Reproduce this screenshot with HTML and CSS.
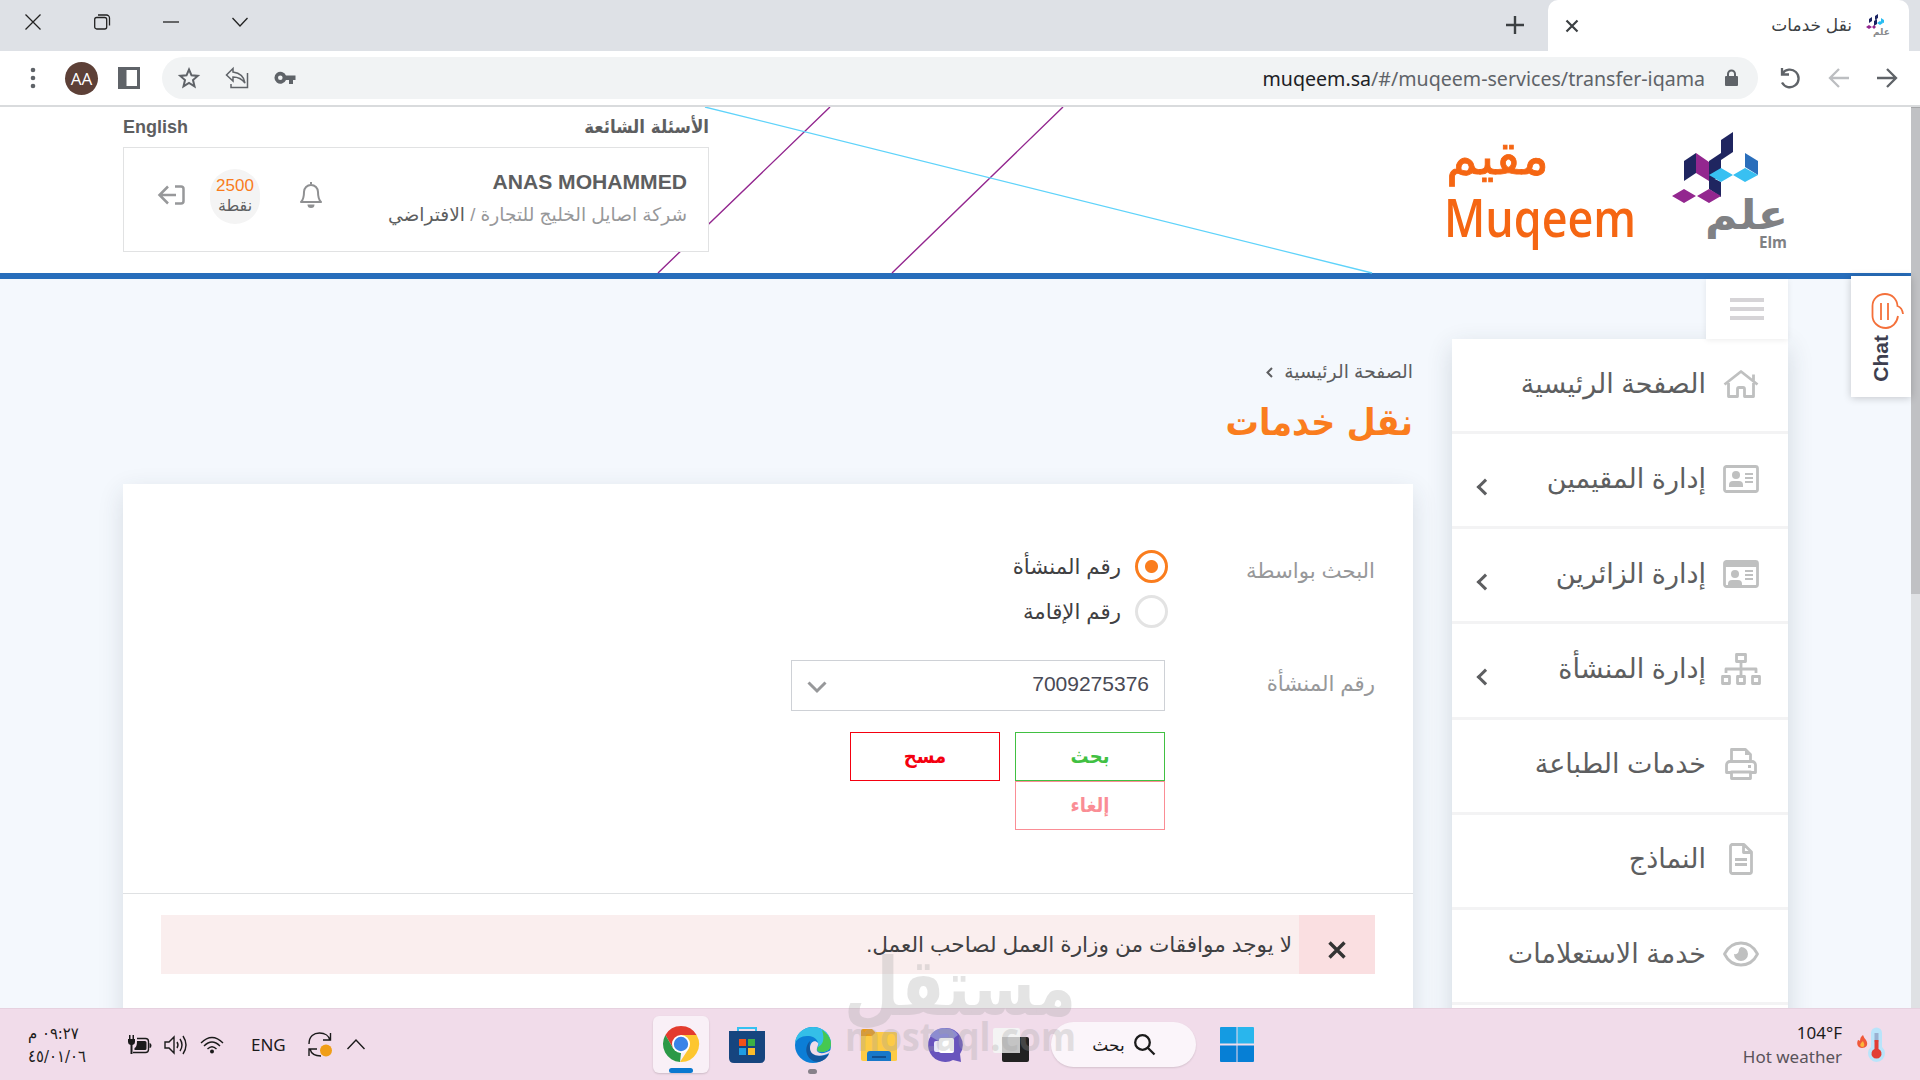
FILE: index.html
```html
<!DOCTYPE html>
<html lang="ar" dir="rtl">
<head>
    <meta charset="UTF-8">
    <meta name="viewport" content="width=device-width, initial-scale=1.0">
    <title>نقل خدمات</title>
    <link rel="stylesheet" href="styles.css">
</head>
<body>
    <!-- Browser tabs -->
    <div class="tabstrip">
        <div class="window-controls">
            <svg width="16" height="18" viewBox="0 0 16 18"><path d="M.5 1.5l15 15M15.500 1.500l-15 15"/></svg>
            <svg width="16" height="16" viewBox="0 0 16 16"><rect x=".7" y="3.500" width="12" height="11.500" rx="2"/><path d="M4 1h8.500a3 3 0 0 1 3 3v7.500"/></svg>
            <svg width="16" height="16" viewBox="0 0 16 16"><path d="M0 8h16"/></svg>
            <svg width="16" height="16" viewBox="0 0 16 16"><path d="M.5 4l7.500 8 7.500-8"/></svg>
        </div>
        <svg class="new-tab" width="18" height="18" viewBox="0 0 18 18"><path d="M9 0v18M0 9h18"/></svg>
        <div class="tab">
            <svg class="tab-close" width="12" height="12" viewBox="0 0 12 12"><path d="M.5.5l11 11M11.500.5l-11 11"/></svg>
            <span class="tab-title" dir="rtl">نقل خدمات</span>
            <svg class="favicon" width="24" height="24" viewBox="0 0 24 24">
                <path fill="#1c2463" d="M9 2l3-2v4L9 6zM3 5l3-2v4L3 9zM8 7l3-2v5L8 12z"/>
                <path fill="#27bdf2" d="M11 9l3-2 3 2-3 2zM15 4l3 2v3l-3-1z"/>
                <path fill="#93278f" d="M0 13l3-2 3 2-3 2zM6 13l2-2 2 2-2 2z"/>
                <text class="favicon-name" x="7" y="21">علم</text>
            </svg>
        </div>
    </div>

    <!-- Browser toolbar -->
    <div class="toolbar">
        <svg class="dots" width="6" height="22" viewBox="0 0 6 22"><circle cx="3" cy="3" r="2.300"/><circle cx="3" cy="11" r="2.300"/><circle cx="3" cy="19" r="2.300"/></svg>
        <span class="avatar">AA</span>
        <svg class="side-panel" width="22" height="22" viewBox="0 0 22 22"><path d="M0 0h22v22H0zM8.500 3v16H19V3z" fill-rule="evenodd"/></svg>
        <div class="omnibox">
            <svg width="22" height="22" viewBox="0 0 22 22"><path fill="none" stroke="#5f6368" stroke-width="2" d="M11 2.500l2.500 5.800 6.300.6-4.800 4.200 1.500 6.200L11 16l-5.500 3.300L7 13.100 2.200 8.900l6.300-.6z"/></svg>
            <svg width="24" height="22" viewBox="0 0 24 22"><path fill="none" stroke="#5f6368" stroke-width="1.500" d="M8 1.500L1.500 8 8 14v-4c6 0 9 2 12 6-1-7-5-10-12-11zM6 17v3.500h16.500V6"/></svg>
            <svg width="22" height="14" viewBox="0 0 22 14"><path fill="#5f6368" fill-rule="evenodd" d="M12 4.500A6 6 0 1 0 12 9h3v4h4V9h2.500V4.500zM6.300 4.500a2.300 2.300 0 1 1 0 4.600 2.300 2.300 0 0 1 0-4.600z"/></svg>
            <span class="url">muqeem.sa<span>/#/muqeem-services/transfer-iqama</span></span>
            <svg class="lock" width="13" height="18" viewBox="0 0 13 18"><path fill="#5f6368" fill-rule="evenodd" d="M2 7V5a4.500 4.500 0 0 1 9 0v2h1a1 1 0 0 1 1 1v8a1 1 0 0 1-1 1H1a1 1 0 0 1-1-1V8a1 1 0 0 1 1-1zm2 0h5V5a2.500 2.500 0 0 0-5 0z"/></svg>
        </div>
        <svg class="nav-icon" width="22" height="22" viewBox="0 0 22 22"><path d="M3.500 6.500A8.800 8.800 0 1 1 3 15.500M3 1v6.500h7"/></svg>
        <svg class="nav-icon disabled" width="20" height="20" viewBox="0 0 20 20"><path d="M10 1l-9 9 9 9M1 10h19"/></svg>
        <svg class="nav-icon" width="20" height="20" viewBox="0 0 20 20"><path d="M10 1l9 9-9 9M0 10h19"/></svg>
    </div>

    <div class="viewport">
        <div class="page">
            <header class="header">
                <svg class="header-lines" width="1911" height="166" viewBox="0 0 1911 166">
                    <path stroke="#93278f" stroke-width="1.400" d="M830 0L658 166M1063 0L892 166"/>
                    <path stroke="#5fd3fa" stroke-width="1.300" d="M705 0l667 166"/>
                </svg>
                <div class="logos">
                    <svg width="116" height="120" viewBox="0 0 116 120">
                        <path fill="#1f2560" d="M49 7l12-8v20l-12 8zM12 28l12-8v20l-12 8zM37 28l12-8v22l-12 8zM37 43l12 6v15l-12-8z"/>
                        <path fill="#93278f" d="M24 20l13 9v19l-13-8zM0 63l12-7 12 7-12 7zM25 63l12-7 12 7-12 7z"/>
                        <path fill="#2a6ebb" d="M73 20l13 8v14l-13-8z"/>
                        <path fill="#38c0f2" d="M37 42l12-7 12 7-12 7zM61 42l12-7 13 7-13 7z"/>
                        <text class="elm-ar" x="116" y="96" textLength="83" lengthAdjust="spacingAndGlyphs">علم</text>
                        <text class="elm-en" x="115" y="115" textLength="28" lengthAdjust="spacingAndGlyphs">Elm</text>
                    </svg>
                    <svg width="190" height="120" viewBox="0 0 190 120">
                        <text class="muqeem-ar" x="102" y="41" textLength="103" lengthAdjust="spacingAndGlyphs">مقيم</text>
                        <text class="muqeem-en" x="-3" y="104" direction="ltr" textLength="192" lengthAdjust="spacingAndGlyphs">Muqeem</text>
                    </svg>
                </div>
                <div class="account">
                    <div class="account-links">
                        <a>الأسئلة الشائعة</a>
                        <a>English</a>
                    </div>
                    <div class="account-box">
                        <div class="account-info">
                            <div class="account-name">ANAS MOHAMMED</div>
                            <div class="account-company">شركة اصايل الخليج للتجارة / <b>الافتراضي</b></div>
                        </div>
                        <svg class="bell" width="24" height="26" viewBox="0 0 24 26"><path fill="none" stroke="#8f9092" stroke-width="2" stroke-linejoin="round" d="M12 0v2M2 20c2-2 3-4 3-10a7 7 0 0 1 14 0c0 6 1 8 3 10z"/><path fill="#8f9092" d="M8.500 22.500h7a3.500 3.500 0 0 1-7 0z"/></svg>
                        <div class="points"><span>2500</span>نقطة</div>
                        <svg class="logout" width="27" height="20" viewBox="0 0 27 20"><path d="M10 1.500L1.500 10l8.500 8.500M2 10h16M17 1.500h6a2.500 2.500 0 0 1 2.500 2.500v12a2.500 2.500 0 0 1-2.500 2.500h-6"/></svg>
                    </div>
                </div>
            </header>

            <div class="content">
                <aside class="sidebar">
                    <div class="menu-toggle"><i></i><i></i><i></i></div>
                    <ul class="menu">
                        <li>
                            <svg width="36" height="28" viewBox="0 0 36 28"><path d="M1.500 14.500L18 1.500l16.500 13M5.500 13v13.500h9V19a1.500 1.500 0 0 1 1.500-1.500h4a1.500 1.500 0 0 1 1.500 1.500v7.500h9V13M30.500 11V4.500"/></svg>
                            <span>الصفحة الرئيسية</span>
                        </li>
                        <li class="has-children">
                            <svg width="36" height="28" viewBox="0 0 36 28"><rect x="1.500" y="1.500" width="33" height="25" rx="2"/><path class="thin" d="M22 9h8M22 13h8M22 17h8"/><circle class="solid" cx="13" cy="10" r="4"/><path class="solid" d="M6 22v-2q0-4 4-4h6q4 0 4 4v2z"/></svg>
                            <span>إدارة المقيمين</span>
                        </li>
                        <li class="has-children">
                            <svg width="36" height="28" viewBox="0 0 36 28"><rect x="1.500" y="1.500" width="33" height="25" rx="2"/><path class="solid" d="M1 1h34v6H1z"/><path class="thin" d="M22 11h8M22 15h8M22 19h8"/><circle class="solid" cx="12" cy="14" r="4"/><path class="solid" d="M5 27v-3q0-4 4-4h6q4 0 4 4v3z"/></svg>
                            <span>إدارة الزائرين</span>
                        </li>
                        <li class="has-children">
                            <svg class="wide" width="40" height="32" viewBox="0 0 40 32"><path d="M15.500 1.500h9v7h-9zM1.500 23.500h7v7h-7zM16.500 23.500h7v7h-7zM31.500 23.500h7v7h-7zM20 9v14M5 20v-4h30v4"/></svg>
                            <span>إدارة المنشأة</span>
                        </li>
                        <li>
                            <svg width="36" height="32" viewBox="0 0 36 32"><path d="M8.500 14V1.500h14l5 5V14M8 24.500H3.500V17a3.500 3.500 0 0 1 3.500-3.500h22a3.500 3.500 0 0 1 3.500 3.500v7.500H28M8.500 24h19v6.500h-19z"/><path class="solid" d="M22 1v6h6zM25 17h3v3h-3z"/></svg>
                            <span>خدمات الطباعة</span>
                        </li>
                        <li>
                            <svg width="36" height="32" viewBox="0 0 36 32"><path d="M9 1.500h12l7.500 7.500v19.500a2 2 0 0 1-2 2H9.500a2 2 0 0 1-2-2v-25a2 2 0 0 1 2-2zM20.500 2v7.500h8M12 16.500h12M12 21.500h12"/></svg>
                            <span>النماذج</span>
                        </li>
                        <li>
                            <svg width="36" height="26" viewBox="0 0 36 26"><path d="M1.500 13C5 6 11 2 18 2s13 4 16.500 11C31 20 25 24 18 24S5 20 1.500 13z"/><path class="solid" d="M18 6a7 7 0 1 1-7 7q5 1 5-5z"/></svg>
                            <span>خدمة الاستعلامات</span>
                        </li>
                        <li></li>
                    </ul>
                </aside>

                <main class="main">
                    <div class="breadcrumb">
                        <span>الصفحة الرئيسية</span>
                        <svg width="7" height="11" viewBox="0 0 7 11"><path d="M6 1L1.500 5.500 6 10"/></svg>
                    </div>
                    <h1>نقل خدمات</h1>
                    <div class="card">
                        <div class="form">
                            <div class="form-row">
                                <label class="form-label">البحث بواسطة</label>
                                <div class="radios">
                                    <div class="radio checked"><i></i>رقم المنشأة</div>
                                    <div class="radio"><i></i>رقم الإقامة</div>
                                </div>
                            </div>
                            <div class="form-row">
                                <label class="form-label select-label">رقم المنشأة</label>
                                <div class="select">
                                    7009275376
                                    <svg width="20" height="12" viewBox="0 0 20 12"><path d="M1.500 1.500L10 10l8.500-8.500"/></svg>
                                </div>
                            </div>
                            <div class="buttons">
                                <button class="btn search">بحث</button>
                                <button class="btn clear">مسح</button>
                                <button class="btn cancel">إلغاء</button>
                            </div>
                        </div>
                        <div class="results">
                            <div class="alert">
                                <div class="alert-icon">
                                    <svg width="18" height="18" viewBox="0 0 18 18"><path d="M1.500 1.500l15 15M16.500 1.500l-15 15"/></svg>
                                </div>
                                <span>لا يوجد موافقات من وزارة العمل لصاحب العمل.</span>
                            </div>
                        </div>
                    </div>
                </main>
            </div>

            <div class="chat">
                <svg width="34" height="36" viewBox="0 0 34 36"><path d="M27 23c-1 7-6 12-12 12C7 35 1.500 29 1.500 23V13C1.500 6 7 1 14 1s12 5 12.500 12c3 1 5 4 5.500 8M10 10v17M17 10v17"/></svg>
                <span>Chat</span>
            </div>
        </div>
        <div class="scrollbar"><div class="thumb"></div></div>
    </div>

    <!-- Windows taskbar -->
    <div class="taskbar">
        <div class="tray">
            <div class="clock"><span dir="rtl">٠٩:٢٧ م</span><span>٤٥/٠١/٠٦</span></div>
            <svg class="battery" width="24" height="20" viewBox="0 0 24 20"><path class="outline" d="M9 3.500h8.500a3 3 0 0 1 3 3v8a3 3 0 0 1-3 3H5"/><path d="M6.500 13q2.500-1 2.500-7H17q1.500 0 1.500 1.500v6q0 1.500-1.500 1.500H6.500zM21.500 8q2 0 2 2.500t-2 2.500zM0 4h7v3q0 2.500-2.500 3v9h-2v-9Q0 9.500 0 7zM1 0h1.500v4H1zM4.500 0H6v4H4.500z"/></svg>
            <svg class="speaker" width="24" height="20" viewBox="0 0 24 20"><path d="M1 7v6h4l5 5V2L5 7zM13 7q2 3 0 6M16 4q4 6 0 12M19 1q6 9 0 18"/></svg>
            <svg class="wifi" width="24" height="18" viewBox="0 0 24 18"><path d="M1 7q11-11 22 0M4 10q8-8 16 0M7.500 13q4.500-4.500 9 0"/><circle cx="12" cy="15.500" r="2"/></svg>
            <span class="lang">ENG</span>
            <svg class="sync" width="24" height="25" viewBox="0 0 24 25"><path d="M1 12C1 4 6 1 11.500 1S21 4 22 8M22.500 1v7H15M13 24c-6 0-10-3-11-7M1 24v-7h8"/><circle cx="18" cy="18.500" r="6"/></svg>
            <svg class="chevron" width="18" height="12" viewBox="0 0 18 12"><path d="M.5 10L9 1l8.500 9"/></svg>
        </div>
        <div class="apps">
            <div class="app active">
                <svg width="36" height="36" viewBox="0 0 36 36">
                    <path fill="#e33b2e" d="M2.400 9A18 18 0 0 1 33.600 9H18l-7.800 13.500z"/>
                    <path fill="#2b9947" d="M2.400 9l7.800 13.500L18 27l-1 9A18 18 0 0 1 2.400 9z"/>
                    <path fill="#fdc62f" d="M33.600 9A18 18 0 0 1 17 36l8.800-13.500L18 9z"/>
                    <circle cx="18" cy="18" r="9" fill="#fff"/><circle cx="18" cy="18" r="7.200" fill="#3983e8"/>
                </svg>
            </div>
            <svg width="36" height="36" viewBox="0 0 36 36">
                <path fill="none" stroke="#35c1f1" stroke-width="2" d="M9 6V1h18v5"/>
                <path fill="#16457f" d="M0 4h36v27q0 5-5 5H5q-5 0-5-5z"/>
                <path fill="#f1511b" d="M10 12h7v7h-7z"/><path fill="#3cb044" d="M19 12h7v7h-7z"/><path fill="#1e9de3" d="M10 21h7v7h-7z"/><path fill="#fbbc2a" d="M19 21h7v7h-7z"/>
            </svg>
            <div class="app running">
                <svg width="36" height="36" viewBox="0 0 36 36">
                    <circle cx="18" cy="18" r="18" fill="#0c7ed6"/>
                    <path fill="#34bfe8" d="M0 16C1 6 9 0 18 0c11 0 18 8 18 16 0 7-5 9-9 9-6 0-5-3-4-5 1-3 0-11-11-11C6 9 2 12 0 16z"/>
                    <path fill="#46c850" d="M27 3c6 4 9 9 9 14 0 6-5 8-9 8-6 0-5-3-4-5 5-2 7-8 4-17z"/>
                    <path fill="#12579d" d="M15 14c-8 8-2 21 8 21 6-1 9-4 11-8-8 4-22 2-19-13z"/>
                    <path fill="#f1dcea" d="M15 21c0-6 5-9 8-5 1 2-2 5-1 8 3 4 9 2 14-1l-2 3c-9 5-19 3-19-5z"/>
                </svg>
            </div>
            <svg width="36" height="34" viewBox="0 0 36 34">
                <path fill="#e79a1b" d="M0 3q0-2 2-2h9l4 4h19q2 0 2 2v10H0z"/><path fill="#fdcb45" d="M0 8h11l4-4h19q2 0 2 2v26q0 1-2 1H2q-2 0-2-2z"/>
                <path fill="#1878c9" d="M6 33V26q0-3 3-3h18q3 0 3 3v7z"/><path fill="#124f8f" d="M11 28h14v2H11z"/>
            </svg>
            <svg width="36" height="36" viewBox="0 0 36 36">
                <path fill="#6854bd" d="M17 1a17 17 0 1 0 9 32l8 2-1-8A17 17 0 0 0 17 1z"/><path fill="#8c8cd0" d="M3 9Q8 1 17 1q10 0 14 7L18 18z"/>
                <rect x="7" y="14" width="9" height="11" rx="2" fill="#e8e8fa"/><rect x="12" y="11" width="15" height="15" rx="2" fill="#fff"/>
            </svg>
            <svg width="36" height="34" viewBox="0 0 36 34"><rect x="9" y="9" width="27" height="25" rx="2" fill="#222"/><rect width="27" height="25" rx="2" fill="#f4f4f4"/><path fill="#c4c4c4" d="M9 9h18v16H9z"/></svg>
            <div class="search-pill">
                <span>بحث</span>
                <svg width="21" height="21" viewBox="0 0 21 21"><circle cx="8.500" cy="8.500" r="7.300"/><path d="M14 14l6.500 6.500"/></svg>
            </div>
            <svg width="34" height="35" viewBox="0 0 34 35"><path fill="#149be2" d="M0 1q0-1 1-1h15.500v16.500H0z"/><path fill="#29b6ed" d="M17.500 0H33q1 0 1 1v15.500H17.500z"/><path fill="#067fd5" d="M17.500 18.500H34V34q0 1-1 1H17.500zM0 18.500h16.500V35H1q-1 0-1-1z"/></svg>
        </div>
        <div class="weather">
            <div class="weather-text"><b>104°F</b><span>Hot weather</span></div>
            <svg width="28" height="34" viewBox="0 0 28 34">
                <path fill="#b9e4fa" d="M14 5a5.500 5.500 0 0 1 11 0v14a8.500 8.500 0 1 1-11 0z"/>
                <path fill="#9ab0d0" d="M17.500 5h4v9h-4z"/><path fill="#e23d33" d="M17.500 12h4v9a5 5 0 1 1-4 0z"/>
                <path fill="#f0593a" d="M6 7q1 3 3 5c3 5 0 8-4 8s-6-4-4-8q1 0 2 1 0-4 3-6z"/><path fill="#fbb53c" d="M6 13q3 6-1 6-3-1-1-4z"/>
            </svg>
        </div>
    </div>

    <svg class="watermark" width="240" height="120" viewBox="0 0 240 120">
        <text class="watermark-ar" x="235" y="71" textLength="232" lengthAdjust="spacingAndGlyphs">مستقل</text>
        <text class="watermark-en" x="4" y="107" direction="ltr" textLength="231" lengthAdjust="spacingAndGlyphs">mostaql.com</text>
    </svg>
</body>
</html>
```
FILE: styles.css
```css
*,
*::before,
*::after {
    margin: 0;
    padding: 0;
    box-sizing: border-box;
}

body {
    width: 1920px;
    height: 1080px;
    overflow: hidden;
    font-family: "Liberation Sans", "DejaVu Sans", sans-serif;
    color: #5d5e60;
    background: #fff;
}

svg {
    display: block;
    flex: none;
    overflow: visible;
}

/* Browser window */
.tabstrip {
    direction: ltr;
    display: flex;
    height: 51px;
    background: #dee1e6;
}

.window-controls {
    display: flex;
    align-items: center;
    gap: 53px;
    height: 43px;
    padding-left: 25px;
}

.window-controls svg {
    fill: none;
    stroke: #222;
    stroke-width: 1.3;
}

.new-tab {
    margin: 16px 24px 0 auto;
    stroke: #3c4043;
    stroke-width: 2.4;
}

.tab {
    display: flex;
    align-items: center;
    width: 361px;
    margin-right: 11px;
    padding: 0 19px 0 18px;
    background: #fff;
    border-radius: 10px 10px 0 0;
}

.tab-close {
    stroke: #3c4043;
    stroke-width: 2.2;
}

.tab-title {
    margin-left: auto;
    margin-right: 14px;
    font-size: 17px;
    color: #3c4043;
}

.favicon-name {
    font-size: 9px;
    font-weight: bold;
    fill: #8a8b8e;
    direction: ltr;
}

.toolbar {
    direction: ltr;
    display: flex;
    align-items: center;
    height: 56px;
    padding: 0 23px 0 30px;
    border-bottom: 2px solid #d9dbdd;
}

.dots,
.side-panel {
    fill: #5f6368;
}

.avatar {
    width: 33px;
    height: 33px;
    margin: 0 20px 0 29px;
    border-radius: 50%;
    background: #5d4037;
    color: #fff;
    font: 17px/33px "Open Sans", sans-serif;
    text-align: center;
}

.omnibox {
    display: flex;
    align-items: center;
    width: 1596px;
    height: 42px;
    margin-left: 22px;
    padding: 0 20px 0 16px;
    gap: 25px;
    border-radius: 21px;
    background: #f1f3f4;
}

.url {
    margin-left: auto;
    font: 19.6px "Noto Sans", sans-serif;
    color: #202124;
}

.url span {
    color: #5f6368;
}

.lock {
    margin-left: -5px;
}

.nav-icon {
    margin-left: 28px;
    fill: none;
    stroke: #5f6368;
    stroke-width: 2.3;
}

.omnibox + .nav-icon {
    margin-left: 21px;
}

.disabled {
    stroke: #bcbec1;
}

.viewport {
    direction: ltr;
    display: flex;
    height: 901px;
    overflow: hidden;
}

.page {
    position: relative;
    direction: rtl;
    width: 1911px;
    background: #f4f8fd;
}

.scrollbar {
    width: 9px;
    background: #dfe1e4;
}

.thumb {
    height: 487px;
    background: #c0c1c4;
    border-top: 1px solid #a6a7a9;
}

/* Site header */
.header {
    position: relative;
    display: flex;
    justify-content: space-between;
    height: 172px;
    padding: 0 123px;
    background: #fff;
    border-bottom: 6px solid #276dbb;
}

.header-lines {
    position: absolute;
    left: 0;
    top: 0;
    fill: none;
}

.logos {
    display: flex;
    gap: 35px;
    padding-top: 26px;
}

.elm-ar {
    font-size: 41px;
    font-weight: bold;
    fill: #808184;
}

.elm-en {
    font: bold 16px "Open Sans", sans-serif;
    fill: #808184;
}

.muqeem-ar {
    font-size: 51px;
    fill: #f56613;
    stroke: #f56613;
    stroke-width: 0.8;
}

.muqeem-en {
    font: 600 53px "Open Sans", sans-serif;
    fill: #f56613;
}

.account {
    position: relative;
    width: 586px;
}

.account-links {
    display: flex;
    justify-content: space-between;
    height: 40px;
    font-size: 18px;
    line-height: 40px;
    font-weight: bold;
}

.account-links a:first-child {
    font: bold 18.5px/40px "DejaVu Sans Condensed", "DejaVu Sans", sans-serif;
}

.account-box {
    display: flex;
    height: 105px;
    align-items: center;
    padding: 0 21px 9px 34px;
    border: 1px solid #e1e2e3;
    background: #fff;
}

.account-info {
    margin-left: auto;
}

.account-name {
    font-size: 21.1px;
    font-weight: bold;
    line-height: 32px;
    margin-top: 6px;
}

.account-company {
    font-size: 18.6px;
    line-height: 33px;
    color: #97989a;
}

.account-company b {
    font-weight: normal;
    color: #5d5e60;
}

.bell {
    margin-left: 39px;
}

.points {
    width: 50px;
    height: 55px;
    margin: 3px 0 0 25px;
    padding-top: 7px;
    border-radius: 25px;
    background: #f4f4f4;
    font-size: 16px;
    line-height: 20px;
    text-align: center;
}

.points span {
    display: block;
    font-size: 17px;
    color: #f97c1c;
}

.logout {
    fill: none;
    stroke: #97989a;
    stroke-width: 2.5;
}

/* Sidebar and main column */
.content {
    display: flex;
    gap: 39px;
    padding: 0 123px;
}

.sidebar {
    width: 336px;
}

.menu-toggle {
    position: relative;
    display: flex;
    flex-direction: column;
    gap: 5px;
    width: 82px;
    height: 60px;
    padding: 19px 24px;
    background: #fff;
    box-shadow: 0 1px 6px rgba(0, 0, 0, 0.08);
}

.menu-toggle i {
    height: 4px;
    background: #d6d4d7;
}

.menu {
    list-style: none;
    background: #fff;
    box-shadow: 0 8px 24px rgba(40, 55, 70, 0.16);
}

.menu li {
    position: relative;
    display: flex;
    align-items: center;
    height: 95.15px;
    padding: 0 29px 3px 24px;
    border-bottom: 3px solid #f3f3f4;
    font-size: 27px;
}

.menu svg {
    margin-left: 17px;
    fill: none;
    stroke: #bfc0c0;
    stroke-width: 2.8;
    stroke-linejoin: round;
}

.menu svg.wide {
    margin: 0 -2px 0 15px;
}

.menu .solid {
    fill: #bfc0c0;
    stroke: none;
}

.menu .thin {
    stroke-width: 2;
}

.has-children::after {
    content: "";
    width: 12px;
    height: 12px;
    margin: 17px auto 0 3px;
    border-left: 3px solid #5d5e60;
    border-bottom: 3px solid #5d5e60;
    transform: rotate(45deg);
}

.main {
    width: 1290px;
    padding-top: 78px;
}

.breadcrumb {
    display: flex;
    align-items: center;
    gap: 11px;
    height: 30px;
    font-size: 18.8px;
}

.breadcrumb svg {
    fill: none;
    stroke: #5d5e60;
    stroke-width: 2;
}

h1 {
    height: 97px;
    font: bold 37px/71px "DejaVu Sans Condensed", "DejaVu Sans", sans-serif;
    color: #fa7d1e;
}

.card {
    height: 560px;
    background: #fff;
    box-shadow: 0 8px 24px rgba(40, 55, 70, 0.14);
}

.form {
    height: 410px;
    padding: 66px 38px 0;
    border-bottom: 1px solid #dfe1e3;
}

.form-row {
    display: flex;
    font-size: 21.3px;
}

.form-label {
    width: 207px;
    padding-top: 5px;
    line-height: 33px;
    color: #97989a;
}

.select-label {
    padding-top: 8px;
}

.radios {
    display: flex;
    flex-direction: column;
    gap: 12px;
    height: 110px;
}

.radio {
    display: flex;
    align-items: center;
    gap: 14px;
    height: 33px;
    color: #3f4042;
}

.radio i {
    width: 33px;
    height: 33px;
    border: 3px solid #e3e3e3;
    border-radius: 50%;
}

.radio.checked i {
    border-color: #fa7d1e;
    background: radial-gradient(circle, #fa7d1e 6px, #fff 7px);
}

.select {
    display: flex;
    align-items: center;
    justify-content: space-between;
    width: 374px;
    height: 51px;
    margin-right: 3px;
    padding: 0 15px 3px;
    border: 1px solid #ced1d6;
    font-size: 21px;
    color: #494a55;
}

.select svg {
    margin-top: 5px;
    fill: none;
    stroke: #97989a;
    stroke-width: 3;
}

.buttons {
    display: flex;
    flex-wrap: wrap;
    width: 374px;
    margin: 21px 210px 0 0;
    column-gap: 15px;
}

.btn {
    width: 150px;
    height: 49px;
    padding-bottom: 2px;
    background: #fff;
    border: 1px solid;
    font: bold 20px "DejaVu Sans Condensed", "DejaVu Sans", sans-serif;
}

.search {
    color: #41c042;
}

.clear {
    color: #f4000f;
}

.cancel {
    color: #fa8d95;
}

.results {
    padding: 21px 38px;
}

.alert {
    display: flex;
    align-items: center;
    height: 59px;
    background: #faeeee;
    font-size: 21.6px;
    color: #3f4042;
}

.alert-icon {
    display: flex;
    align-items: center;
    justify-content: center;
    width: 76px;
    height: 59px;
    margin-left: 7px;
    padding-top: 10px;
    background: #fadfe1;
}

.alert-icon svg {
    stroke: #333;
    stroke-width: 3.4;
}

.chat {
    position: absolute;
    top: 169px;
    right: 0;
    width: 60px;
    height: 121px;
    padding: 17px 19px 0 0;
    background: #fff;
    box-shadow: 0 1px 8px rgba(0, 0, 0, 0.2);
}

.chat svg {
    margin-right: -13px;
    fill: none;
    stroke: #f4703a;
    stroke-width: 1.8;
}

.chat span {
    display: block;
    width: 22px;
    margin-top: 6px;
    writing-mode: vertical-rl;
    transform: rotate(180deg);
    direction: ltr;
    font-size: 21px;
    line-height: 22px;
    font-weight: bold;
    color: #3e3f4f;
}

/* Taskbar */
.taskbar {
    direction: ltr;
    display: flex;
    justify-content: space-between;
    height: 72px;
    padding: 0 35px 0 28px;
    background: #f1dcea;
    border-top: 1px solid #e6d1df;
    font-family: "Noto Sans", "DejaVu Sans", sans-serif;
    color: #1b1b1b;
}

.tray {
    display: flex;
    align-items: center;
    width: 625px;
}

.tray svg {
    fill: none;
    stroke: #1b1b1b;
    stroke-width: 1.4;
}

.clock {
    display: flex;
    flex-direction: column;
    width: 60px;
    margin-right: 40px;
    font: 16.5px/23px "DejaVu Sans Condensed", "DejaVu Sans", sans-serif;
    white-space: nowrap;
}

.clock span {
    text-align: left;
}

.tray .battery {
    fill: #1b1b1b;
    stroke: none;
}

.battery .outline {
    fill: none;
    stroke: #1b1b1b;
}

.speaker {
    margin: 0 12px;
}

.wifi circle {
    fill: #1b1b1b;
    stroke: none;
}

.lang {
    width: 56px;
    padding-left: 27px;
    margin-right: 28px;
    font-size: 17px;
}

.sync circle {
    fill: #f09e18;
    stroke: none;
}

.chevron {
    margin-left: 15px;
}

.apps {
    display: flex;
    align-items: center;
    gap: 30px;
    width: 602px;
}

.app {
    position: relative;
}

.active {
    padding: 10px;
    margin-right: -10px;
    height: 57px;
    border-radius: 6px;
    background: #f9f0f7;
    box-shadow: 0 1px 2px rgba(0, 0, 0, 0.15);
}

.active::after,
.running::after {
    content: "";
    position: absolute;
    left: 16px;
    bottom: 0;
    width: 24px;
    height: 5px;
    border-radius: 3px;
    background: #0a78d0;
}

.running::after {
    left: 13px;
    bottom: -11px;
    width: 9px;
    background: #87818a;
}

.search-pill {
    display: flex;
    align-items: center;
    justify-content: center;
    gap: 9px;
    width: 145px;
    height: 45px;
    margin: 0 -6px 0 -8px;
    border-radius: 23px;
    background: #fbf5fa;
    box-shadow: 0 1px 2px rgba(0, 0, 0, 0.12);
    font-size: 17px;
}

.search-pill svg {
    fill: none;
    stroke: #1b1b1b;
    stroke-width: 2.3;
}

.weather {
    display: flex;
    align-items: center;
    gap: 15px;
    margin-left: auto;
}

.weather-text {
    text-align: right;
    font-size: 17px;
    line-height: 24px;
    color: #59535a;
}

.weather-text b {
    display: block;
    font-weight: normal;
    color: #1b1b1b;
}

/* Watermark lies over the page and the taskbar */
.watermark {
    position: absolute;
    left: 841px;
    top: 944px;
    opacity: 0.28;
    fill: #a0a0a0;
}

.watermark-ar {
    font: bold 80px "DejaVu Sans", sans-serif;
}

.watermark-en {
    font: bold 39px "Open Sans", sans-serif;
}
```
